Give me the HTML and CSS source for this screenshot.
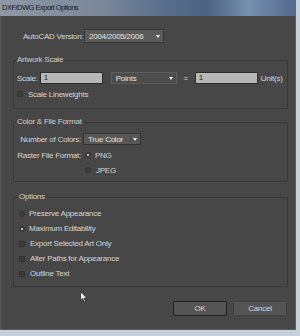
FILE: index.html
```html
<!DOCTYPE html>
<html lang="en">
<head>
    <meta charset="UTF-8">
    <title>DXF/DWG Export Options</title>
    <link rel="stylesheet" href="styles.css">
</head>
<body>
    <div class="dialog">
        <div class="titlebar">DXF/DWG Export Options</div>

        <div class="content">
            <div class="version-row">
                <span class="version-label">AutoCAD Version:</span>
                <div class="select select-version">2004/2005/2006<i class="arrow"></i></div>
            </div>

            <fieldset class="group group-scale">
                <legend>Artwork Scale</legend>
                <div class="scale-row">
                    <span>Scale:</span>
                    <div class="field field-left">1</div>
                    <div class="select select-units">Points<i class="arrow"></i></div>
                    <span class="equals">=</span>
                    <div class="field">1</div>
                    <span class="units">Unit(s)</span>
                </div>
                <div class="option-row check-first">
                    <span class="box"></span>Scale Lineweights
                </div>
            </fieldset>

            <fieldset class="group group-format">
                <legend>Color &amp; File Format</legend>
                <div class="format-grid">
                    <span class="grid-label">Number of Colors:</span>
                    <div class="select select-colors">True Color<span class="divider"></span><i class="arrow"></i></div>

                    <span class="grid-label">Raster File Format:</span>
                    <div class="radio-item"><span class="radio on"></span>PNG</div>

                    <span></span>
                    <div class="radio-item jpeg"><span class="radio"></span>JPEG</div>
                </div>
            </fieldset>

            <fieldset class="group group-options">
                <legend>Options</legend>
                <div class="option-row"><span class="radio"></span>Preserve Appearance</div>
                <div class="option-row"><span class="radio on"></span>Maximum Editability</div>
                <div class="option-row"><span class="box"></span>Export Selected Art Only</div>
                <div class="option-row"><span class="box"></span>Alter Paths for Appearance</div>
                <div class="option-row"><span class="box"></span>Outline Text</div>
            </fieldset>

            <div class="buttons">
                <button class="default-btn">OK</button>
                <button>Cancel</button>
            </div>
        </div>

        <!-- mouse pointer sitting over the dialog -->
        <svg class="cursor" width="8" height="12" viewBox="0 0 8 12">
            <path d="M0.5 0.5 L0.5 9.5 L2.6 7.6 L4.2 11 L5.6 10.4 L4.1 7.1 L7 7.1 Z" fill="#e8e8e8" stroke="#2a2a2a" stroke-width="0.8"/>
        </svg>
    </div>
</body>
</html>
```

FILE: styles.css
```css
body {
    margin: 0;
    width: 300px;
    height: 336px;
    background: #c6d0dc;
    font-family: "Liberation Sans", Arial, sans-serif;
    font-size: 8px;
    letter-spacing: -0.25px;
    color: #d6d6d6;
    overflow: hidden;
}

.dialog {
    position: relative;
    width: 296px;
    height: 330px;
    background: #474747;
    box-shadow: inset 1px 0 0 #585858, inset -1px -1px 0 #5c5c5c;
}

.titlebar {
    height: 16px;
    line-height: 16px;
    padding-left: 2px;
    font-size: 7.5px;
    letter-spacing: -0.5px;
    color: #14171b;
    background: linear-gradient(to right, #8e98a4 0%, #7a8799 35%, #5a6f8c 55%, #4b6283 70%, #7690b0 84%, #53698b 100%);
}

.content {
    padding: 13px 8px 0 13px;
}

.version-row {
    display: flex;
    align-items: center;
    margin-left: 10px;
    height: 14px;
}

.version-label {
    width: 58px;
    margin-right: 3px;
    white-space: nowrap;
}

/* dropdowns */
.select {
    position: relative;
    box-sizing: border-box;
    display: flex;
    align-items: center;
    padding-left: 4px;
    background: #575757;
    border: 1px solid #333;
    color: #e2e2e2;
    white-space: nowrap;
}

.select .arrow {
    position: absolute;
    right: 3px;
    top: 50%;
    margin-top: -1px;
    border-left: 2px solid transparent;
    border-right: 2px solid transparent;
    border-top: 3px solid #eee;
}

.select-version {
    width: 80px;
    height: 14px;
    background: #5b5b5b;
}

.select-units {
    width: 66px;
    height: 12px;
    margin-left: 8px;
    background: #4d4d4d;
    border-color: #5e5e5e;
}

.select-colors {
    width: 58px;
    height: 12px;
}

.select-colors .divider {
    position: absolute;
    right: 9px;
    top: 2px;
    bottom: 2px;
    border-left: 1px solid #444;
}

/* group boxes */
.group {
    margin: 12px 0 0;
    padding: 7px 0 9px 3px;
    border: 1px solid #383838;
    min-width: 0;
}

.group legend {
    padding: 0 1px;
    margin-left: -1px;
    line-height: 10px;
    color: #cfcfcf;
}

.scale-row {
    display: flex;
    align-items: center;
    height: 12px;
}

.field {
    box-sizing: border-box;
    width: 63px;
    height: 12px;
    line-height: 10px;
    padding-left: 3px;
    background: #b7b7b7;
    border: 1px solid #2c2c2c;
    color: #1e1e1e;
}

.field-left {
    margin-left: 2px;
}

.equals {
    width: 18px;
    text-align: center;
}

.units {
    margin-left: 3px;
}

.option-row {
    display: flex;
    align-items: center;
    height: 15px;
}

.check-first {
    height: 10px;
    margin-top: 5px;
}

.box {
    box-sizing: border-box;
    width: 6px;
    height: 6px;
    margin-right: 5px;
    background: #3c3c3c;
    border: 1px solid #333;
}

.radio {
    box-sizing: border-box;
    position: relative;
    width: 6px;
    height: 6px;
    margin-right: 4px;
    border-radius: 50%;
    background: #3d3d3d;
    border: 1px solid #363636;
}

.radio.on::after {
    content: "";
    position: absolute;
    left: 1px;
    top: 1px;
    width: 2px;
    height: 2px;
    border-radius: 50%;
    background: #e6e6e6;
}

.group-format {
    margin-top: 8px;
    padding: 6px 0 6px 3px;
}

.format-grid {
    display: grid;
    grid-template-columns: 64px auto;
    grid-template-rows: 12px 10px 10px;
    column-gap: 2px;
    row-gap: 5px;
    align-items: center;
}

.grid-label {
    text-align: right;
    white-space: nowrap;
}

.radio-item {
    display: flex;
    align-items: center;
    padding-left: 2px;
}

.radio-item.jpeg .radio {
    margin-right: 5px;
}

.group-options {
    margin-top: 10px;
    padding: 4px 0 5px 5px;
}

.buttons {
    display: flex;
    justify-content: flex-end;
    gap: 6px;
    margin-top: 14px;
    padding-right: 1px;
}

.buttons button {
    box-sizing: border-box;
    width: 54px;
    height: 15px;
    padding: 0;
    font-family: inherit;
    font-size: 8px;
    letter-spacing: -0.2px;
    color: #d8d8d8;
    background: #545454;
    border: 1px solid #3d3d3d;
    border-radius: 1px;
}

.buttons .default-btn {
    border-color: #1f1f1f;
}

.cursor {
    position: absolute;
    left: 80px;
    top: 291px;
}
```
